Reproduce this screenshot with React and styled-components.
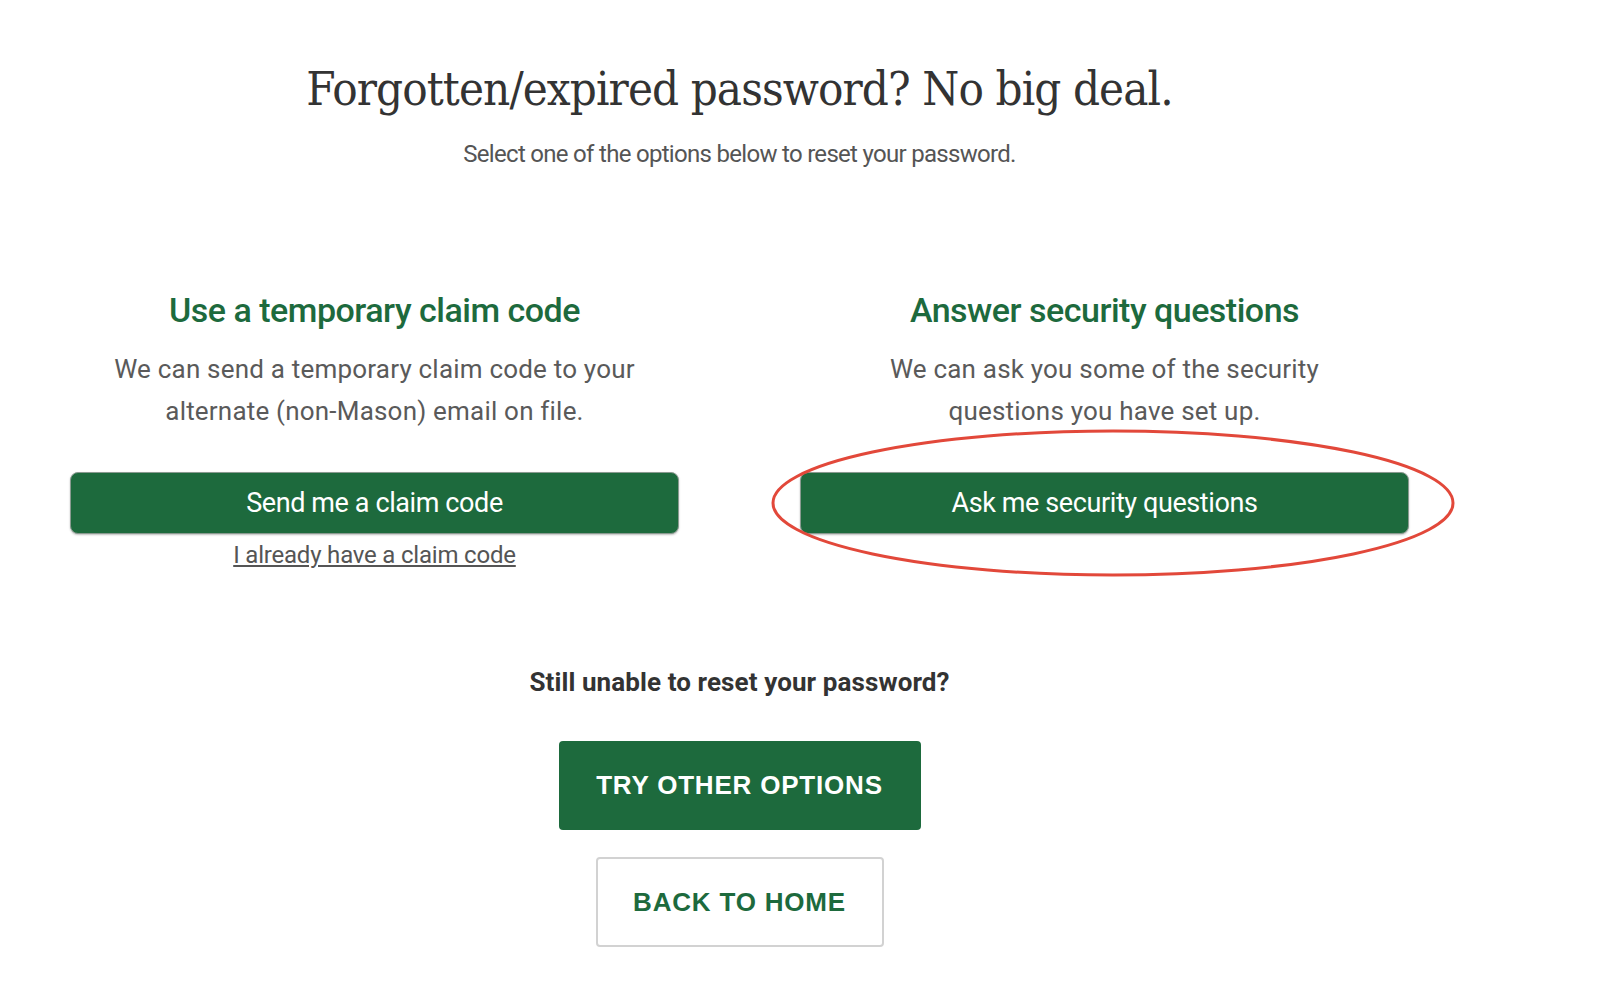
import React from 'react';
import styled, { createGlobalStyle } from 'styled-components';

const GlobalStyle = createGlobalStyle`
    html, body {
        margin: 0;
        padding: 0;
        background: #fff;
        font-family: Roboto, "Liberation Sans", sans-serif;
    }
`;

const green = '#1d6a3d';

export default function App() {
    return (
        <>
            <GlobalStyle />
            <Page>
                <Header>
                    <Title>Forgotten/expired password? No big deal.</Title>
                    <Subtitle>Select one of the options below to reset your password.</Subtitle>
                </Header>
                <Options>
                    <Option>
                        <OptionTitle>Use a temporary claim code</OptionTitle>
                        <OptionText>
                            We can send a temporary claim code to your<br />
                            alternate (non-Mason) email on file.
                        </OptionText>
                        <OptionButton>Send me a claim code</OptionButton>
                        <ClaimLink href="#">I already have a claim code</ClaimLink>
                    </Option>
                    <Option>
                        <OptionTitle>Answer security questions</OptionTitle>
                        <OptionText>
                            We can ask you some of the security<br />
                            questions you have set up.
                        </OptionText>
                        <Highlighted>
                            <OptionButton>Ask me security questions</OptionButton>
                            <Circle viewBox="0 0 684 148" preserveAspectRatio="none">
                                <ellipse cx="342" cy="74" rx="340" ry="72" fill="none" stroke="#e2483a" strokeWidth="3" />
                            </Circle>
                        </Highlighted>
                    </Option>
                </Options>
                <Footer>
                    <StillText>Still unable to reset your password?</StillText>
                    <BigButton>TRY OTHER OPTIONS</BigButton>
                    <BigButton $outline>BACK TO HOME</BigButton>
                </Footer>
            </Page>
        </>
    );
}

const Page = styled.div`
    width: 1339px;
    margin-left: 70px;
    padding-top: 60px;
    padding-bottom: 40px;
`;

const Header = styled.div`
    display: flex;
    flex-direction: column;
    align-items: center;
`;

const Title = styled.h1`
    margin: 0;
    font-family: "DejaVu Serif Condensed", "DejaVu Serif", serif;
    font-weight: 400;
    font-size: 47px;
    line-height: 58px;
    color: #333;
    letter-spacing: -0.9px;
`;

const Subtitle = styled.p`
    margin: 21px 0 0;
    font-size: 24px;
    line-height: 30px;
    color: #555;
    letter-spacing: -0.7px;
`;

const Options = styled.div`
    display: grid;
    grid-template-columns: 609px 609px;
    column-gap: 121px;
    margin-top: 120px;
`;

const Option = styled.div`
    display: flex;
    flex-direction: column;
    align-items: center;
`;

const OptionTitle = styled.h2`
    margin: 0;
    font-size: 34px;
    line-height: 42px;
    font-weight: 500;
    color: ${green};
    letter-spacing: -0.5px;
`;

const OptionText = styled.p`
    margin: 18px 0 0;
    font-size: 26px;
    line-height: 41.5px;
    font-weight: 400;
    color: #5a5a5a;
    text-align: center;
    letter-spacing: 0.2px;
`;

const Highlighted = styled.div`
    position: relative;
    width: 100%;
`;

const OptionButton = styled.button`
    width: 100%;
    height: 62px;
    margin-top: 40px;
    background: ${green};
    border: 1px solid #8a9a90;
    border-radius: 8px;
    color: #fff;
    font-family: Roboto, "Liberation Sans", sans-serif;
    font-size: 27px;
    letter-spacing: -0.4px;
    box-shadow: 0 1px 2px rgba(0, 0, 0, 0.25);
    cursor: pointer;
`;

const Circle = styled.svg`
    position: absolute;
    left: -29px;
    top: -3px;
    width: 684px;
    height: 148px;
    pointer-events: none;
`;

const ClaimLink = styled.a`
    margin-top: 6px;
    font-size: 24px;
    line-height: 30px;
    color: #555;
    text-decoration: underline;
    letter-spacing: -0.2px;
`;

const Footer = styled.div`
    display: flex;
    flex-direction: column;
    align-items: center;
    margin-top: 95px;
`;

const StillText = styled.p`
    margin: 0;
    font-size: 26px;
    line-height: 34px;
    font-weight: 700;
    color: #333;
    letter-spacing: 0.1px;
`;

const BigButton = styled.button`
    margin-top: ${p => (p.$outline ? '27px' : '42px')};
    width: ${p => (p.$outline ? '288px' : '362px')};
    height: ${p => (p.$outline ? '90px' : '89px')};
    background: ${p => (p.$outline ? '#fff' : green)};
    color: ${p => (p.$outline ? green : '#fff')};
    border: ${p => (p.$outline ? '2px solid #d2d2d2' : 'none')};
    border-radius: 4px;
    font-family: "Liberation Sans", Arial, sans-serif;
    font-weight: 700;
    font-size: 26px;
    letter-spacing: 0.8px;
    cursor: pointer;
`;
